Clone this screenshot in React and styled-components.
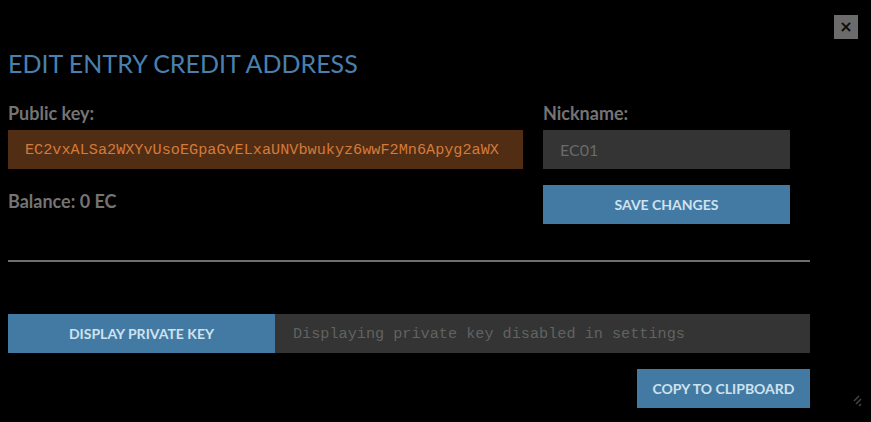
import React from "react";
import styled, { createGlobalStyle } from "styled-components";

const Global = createGlobalStyle`
  html, body { margin: 0; padding: 0; background: #000; }
  body { font-family: Lato, "Noto Sans", sans-serif; }
  * { box-sizing: border-box; }
`;

const Dialog = styled.div`
  position: relative;
  width: 871px;
  height: 422px;
  background: #000;
  padding: 45px 61px 0 8px;
  display: flex;
  flex-direction: column;
`;

const CloseButton = styled.button`
  position: absolute;
  top: 15px;
  left: 834px;
  width: 24px;
  height: 24px;
  border: none;
  padding: 0;
  background: #6b6b6b;
  color: #0d0d0d;
  font-family: "DejaVu Sans", sans-serif;
  font-size: 16px;
  font-weight: bold;
  line-height: 24px;
  text-align: center;
`;

const Title = styled.h1`
  margin: 0;
  font-family: Lato, sans-serif;
  font-weight: 400;
  font-size: 25px;
  line-height: 36px;
  color: #4a80ad;
`;

const TopGrid = styled.div`
  margin-top: 21px;
  display: grid;
  grid-template-columns: 515px 247px;
  column-gap: 20px;
`;

const Column = styled.div`
  display: flex;
  flex-direction: column;
`;

const Label = styled.div`
  font-family: Lato, sans-serif;
  font-weight: 700;
  font-size: 18px;
  line-height: 22px;
  color: #747474;
  margin-bottom: 6px;
`;

const Field = styled.div`
  height: 39px;
  display: flex;
  align-items: center;
  padding-left: ${(p) => p.$pad || 17}px;
  background: ${(p) => p.$bg};
  color: ${(p) => p.$color};
  font-family: ${(p) =>
    p.$mono ? '"Courier New", "Liberation Mono", monospace' : "Lato, sans-serif"};
  font-size: ${(p) => (p.$mono ? "15.2px" : "16px")};
  white-space: nowrap;
  overflow: hidden;
  flex: ${(p) => (p.$grow ? 1 : "none")};
`;

const Balance = styled.div`
  margin-top: 21px;
  font-family: Lato, sans-serif;
  font-weight: 700;
  font-size: 18px;
  line-height: 22px;
  color: #747474;
`;

const Button = styled.button`
  height: 39px;
  border: none;
  padding: 0;
  background: #437aa3;
  color: #cfe2ef;
  font-family: Lato, sans-serif;
  font-weight: 700;
  font-size: 14px;
  text-transform: uppercase;
  width: ${(p) => p.$w || "auto"};
  margin-top: ${(p) => p.$mt || 0}px;
  flex: none;
`;

const Divider = styled.hr`
  margin: 36px 0 0;
  border: none;
  height: 2px;
  background: #6e6e6e;
`;

const KeyRow = styled.div`
  margin-top: 52px;
  display: flex;
`;

const Footer = styled.div`
  margin-top: 16px;
  display: flex;
  justify-content: flex-end;
`;

const Resize = styled.svg`
  position: absolute;
  right: 8px;
  bottom: 14px;
`;

export default function App() {
  return (
    <>
      <Global />
      <Dialog>
        <CloseButton>×</CloseButton>
        <Title>EDIT ENTRY CREDIT ADDRESS</Title>
        <TopGrid>
          <Column>
            <Label>Public key:</Label>
            <Field $bg="#512d13" $color="#d47a3a" $mono>
              EC2vxALSa2WXYvUsoEGpaGvELxaUNVbwukyz6wwF2Mn6Apyg2aWX
            </Field>
            <Balance>Balance: 0 EC</Balance>
          </Column>
          <Column>
            <Label>Nickname:</Label>
            <Field $bg="#333433" $color="#6a6a6a">EC01</Field>
            <Button $mt={16}>Save changes</Button>
          </Column>
        </TopGrid>
        <Divider />
        <KeyRow>
          <Button $w="267px">Display private key</Button>
          <Field $bg="#333433" $color="#626262" $mono $grow $pad={18}>
            Displaying private key disabled in settings
          </Field>
        </KeyRow>
        <Footer>
          <Button $w="173px">Copy to clipboard</Button>
        </Footer>
        <Resize width="10" height="14" viewBox="0 0 10 14">
          <path d="M1 7 L6 2 M3 10 L8 5 M6 12 L8 10" stroke="#444" strokeWidth="1.5" fill="none" />
        </Resize>
      </Dialog>
    </>
  );
}
